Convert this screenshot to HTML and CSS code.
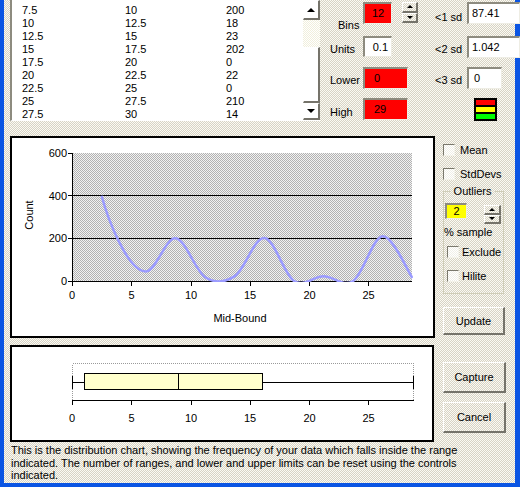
FILE: index.html
```html
<!DOCTYPE html>
<html>
<head>
    <meta charset="UTF-8">
    <title>Distribution</title>
    <link rel="stylesheet" href="styles.css">
</head>
<body>
    <div class="window">
        <div class="top">
            <div class="list">
                <div class="rows">
                    <div class="row"><span>7.5</span><span>10</span><span>200</span></div>
                    <div class="row"><span>10</span><span>12.5</span><span>18</span></div>
                    <div class="row"><span>12.5</span><span>15</span><span>23</span></div>
                    <div class="row"><span>15</span><span>17.5</span><span>202</span></div>
                    <div class="row"><span>17.5</span><span>20</span><span>0</span></div>
                    <div class="row"><span>20</span><span>22.5</span><span>22</span></div>
                    <div class="row"><span>22.5</span><span>25</span><span>0</span></div>
                    <div class="row"><span>25</span><span>27.5</span><span>210</span></div>
                    <div class="row"><span>27.5</span><span>30</span><span>14</span></div>
                </div>
                <div class="scroll">
                    <div class="raised sb-up"><i class="arr-up"></i></div>
                    <div class="track"></div>
                    <div class="raised thumb"></div>
                    <div class="raised sb-down"><i class="arr-down"></i></div>
                </div>
            </div>
            <div class="controls">
                <span class="lbl bins-lbl">Bins</span>
                <div class="bins-cell">
                    <div class="field red bins">12</div>
                    <div class="spin">
                        <span class="raised"><i class="arr-up sm"></i></span>
                        <span class="raised"><i class="arr-down sm"></i></span>
                    </div>
                </div>
                <span class="lbl sd1-lbl">&lt;1 sd</span>
                <div class="field sd">87.41</div>

                <span class="lbl mid-lbl">Units</span>
                <div><div class="field units">0.1</div></div>
                <span class="lbl mid-lbl">&lt;2 sd</span>
                <div class="field sd">1.042</div>

                <span class="lbl mid-lbl">Lower</span>
                <div><div class="field red wide">0</div></div>
                <span class="lbl mid-lbl">&lt;3 sd</span>
                <div class="field sd short">0</div>

                <span class="lbl high-lbl">High</span>
                <div><div class="field red wide">29</div></div>
                <span></span>
                <div class="lights">
                    <span class="l-red"></span>
                    <span class="l-yellow"></span>
                    <span class="l-green"></span>
                </div>
            </div>
        </div>

        <div class="middle">
            <div class="chart">
                <svg class="plot" width="421" height="198" viewBox="0 0 421 198">
                    <defs>
                        <pattern id="grey" width="2" height="2" patternUnits="userSpaceOnUse">
                            <rect width="2" height="2" fill="#f2f2f2"/>
                            <rect width="1" height="1" fill="#b2b2b2"/>
                            <rect x="1" y="1" width="1" height="1" fill="#b2b2b2"/>
                        </pattern>
                        <clipPath id="area"><rect x="60" y="15" width="341" height="129"/></clipPath>
                    </defs>
                    <rect x="60" y="15" width="340" height="128" fill="url(#grey)"/>
                    <g stroke="#000" stroke-width="1" shape-rendering="crispEdges">
                        <line x1="60" y1="57.5" x2="400" y2="57.5"/>
                        <line x1="60" y1="100.5" x2="400" y2="100.5"/>
                        <line x1="60.5" y1="15" x2="60.5" y2="144"/>
                        <line x1="60" y1="143.5" x2="400" y2="143.5"/>
                        <line x1="56" y1="15.5" x2="60" y2="15.5"/>
                        <line x1="56" y1="57.5" x2="60" y2="57.5"/>
                        <line x1="56" y1="100.5" x2="60" y2="100.5"/>
                        <line x1="56" y1="143.5" x2="60" y2="143.5"/>
                        <line x1="60.5" y1="143" x2="60.5" y2="148"/>
                        <line x1="119.5" y1="143" x2="119.5" y2="148"/>
                        <line x1="179.5" y1="143" x2="179.5" y2="148"/>
                        <line x1="238.5" y1="143" x2="238.5" y2="148"/>
                        <line x1="297.5" y1="143" x2="297.5" y2="148"/>
                        <line x1="356.5" y1="143" x2="356.5" y2="148"/>
                    </g>
                    <path clip-path="url(#area)" fill="none" stroke="#9b9bff" stroke-width="2.5"
                        d="M89.6 57.7 C95 78 115 133.4 134 133.4 C143.9 133.4 153.7 99.3 163.6 100.3 C173.5 101.3 183.3 132.9 193.2 139.2 C203.1 145.5 212.9 144.7 222.8 138.1 C232.7 131.6 242.5 99.1 252.4 99.9 C262.3 100.7 272.1 136.6 282 143 C291.9 149.4 301.7 138.3 311.6 138.3 C321.5 138.3 331.3 149.7 341.2 143 C351.1 136.3 360.9 98.7 370.8 98.2 C380.7 97.7 395.5 133 400.4 140"/>
                    <g class="ylab">
                        <text x="55" y="19">600</text>
                        <text x="55" y="62">400</text>
                        <text x="55" y="104">200</text>
                        <text x="55" y="147">0</text>
                    </g>
                    <g class="xlab">
                        <text x="60" y="161">0</text>
                        <text x="119.5" y="161">5</text>
                        <text x="179" y="161">10</text>
                        <text x="238" y="161">15</text>
                        <text x="297.5" y="161">20</text>
                        <text x="356.5" y="161">25</text>
                        <text x="228" y="184">Mid-Bound</text>
                        <text transform="translate(21 77) rotate(-90)">Count</text>
                    </g>
                </svg>
            </div>
            <div class="side">
                <div class="opt mean"><span class="check"></span>Mean</div>
                <div class="opt std"><span class="check"></span>StdDevs</div>
                <fieldset class="outliers">
                    <legend>Outliers</legend>
                    <div class="out-row">
                        <div class="field yellow">2</div>
                        <div class="spin small">
                            <span class="raised"><i class="arr-up sm"></i></span>
                            <span class="raised"><i class="arr-down sm"></i></span>
                        </div>
                    </div>
                    <div class="pct">% sample</div>
                    <div class="opt inner exclude"><span class="check"></span>Exclude</div>
                    <div class="opt inner hilite"><span class="check"></span>Hilite</div>
                </fieldset>
                <div class="btn update">Update</div>
            </div>
        </div>

        <div class="bottom">
            <div class="boxplot">
                <svg class="plot" width="420" height="93" viewBox="0 0 420 93">
                    <rect x="60.5" y="16.5" width="341" height="37" fill="#fff" stroke="#9a9a9a" stroke-dasharray="1 1" shape-rendering="crispEdges"/>
                    <g stroke="#000" stroke-width="1" shape-rendering="crispEdges">
                        <line x1="60" y1="53.5" x2="402" y2="53.5"/>
                        <line x1="60.5" y1="53" x2="60.5" y2="58"/>
                        <line x1="119.5" y1="53" x2="119.5" y2="58"/>
                        <line x1="179.5" y1="53" x2="179.5" y2="58"/>
                        <line x1="238.5" y1="53" x2="238.5" y2="58"/>
                        <line x1="297.5" y1="53" x2="297.5" y2="58"/>
                        <line x1="356.5" y1="53" x2="356.5" y2="58"/>
                        <line x1="60" y1="35.5" x2="402" y2="35.5"/>
                        <line x1="60.5" y1="29" x2="60.5" y2="42"/>
                        <line x1="401.5" y1="29" x2="401.5" y2="42"/>
                        <rect x="72.5" y="26.5" width="178" height="16" fill="#ffffcc"/>
                        <line x1="166.5" y1="26" x2="166.5" y2="43"/>
                    </g>
                    <g class="xlab">
                        <text x="60" y="75">0</text>
                        <text x="119.5" y="75">5</text>
                        <text x="179" y="75">10</text>
                        <text x="238" y="75">15</text>
                        <text x="297.5" y="75">20</text>
                        <text x="356.5" y="75">25</text>
                    </g>
                </svg>
            </div>
            <div class="buttons">
                <div class="btn">Capture</div>
                <div class="btn">Cancel</div>
            </div>
        </div>

        <p class="desc">This is the distribution chart, showing the frequency of your data which falls inside the range<br>indicated. The number of ranges, and lower and upper limits can be reset using the controls<br>indicated.</p>
    </div>
</body>
</html>
```

FILE: styles.css
```css
* {
    margin: 0;
    padding: 0;
}
body {
    font: 11px "Liberation Sans", Arial, sans-serif;
    color: #000;
}
.window {
    width: 520px;
    height: 487px;
    box-sizing: border-box;
    border-left: 4px solid #0b55e3;
    border-right: 5px solid #0b55e3;
    border-bottom: 4px solid #0b55e3;
    padding-left: 6px;
    background: repeating-conic-gradient(#d7d3c5 0 25%, #fbfaf3 0 50%) 0 0 / 2px 2px;
}
.raised {
    box-sizing: border-box;
    display: flex;
    align-items: center;
    justify-content: center;
    border-style: solid;
    border-width: 1px 2px 2px 1px;
    border-color: #fff #75736a #75736a #fff;
}
.arr-up, .arr-down {
    display: block;
    width: 0;
    height: 0;
    border-left: 4px solid transparent;
    border-right: 4px solid transparent;
}
.arr-up {
    border-bottom: 4px solid #000;
}
.arr-down {
    border-top: 4px solid #000;
}
.arr-up.sm, .arr-down.sm {
    border-left-width: 3px;
    border-right-width: 3px;
    border-top-width: 3px;
    border-bottom-width: 3px;
}
.arr-up.sm {
    border-top: 0;
}
.arr-down.sm {
    border-bottom: 0;
}

/* top: list and numeric controls */
.top {
    display: flex;
    height: 121px;
}
.list {
    flex-shrink: 0;
    width: 310px;
    height: 121px;
    box-sizing: border-box;
    border-left: 2px solid #8d8b7f;
    border-bottom: 1px solid #fff;
    background: #fff;
    display: flex;
}
.rows {
    flex: 1;
    padding: 4px 0 0 10px;
    line-height: 13px;
}
.row {
    display: grid;
    grid-template-columns: 103px 101px auto;
}
.scroll {
    width: 17px;
    display: flex;
    flex-direction: column;
}
.sb-up {
    height: 20px;
}
.track {
    height: 27px;
    background: repeating-conic-gradient(#f1efdc 0 25%, #fff 0 50%) 0 0 / 2px 2px;
}
.thumb {
    height: 56px;
}
.sb-down {
    height: 17px;
}
.controls {
    flex-shrink: 0;
    margin-left: 10px;
    padding-top: 2px;
    display: grid;
    grid-template-columns: 33px 72px 32px 53px;
    grid-template-rows: 34px 31px 31px 22px;
    align-items: start;
}
.lbl {
    line-height: 13px;
    white-space: nowrap;
}
.bins-lbl {
    margin: 17px 0 0 8px;
}
.sd1-lbl {
    margin-top: 9px;
}
.mid-lbl {
    margin-top: 7px;
}
.high-lbl {
    margin-top: 8px;
}
.field {
    box-sizing: border-box;
    height: 22px;
    border-style: solid;
    border-width: 2px 1px 1px 2px;
    border-color: #8d8b7f #eeede4 #eeede4 #8d8b7f;
    background: #fff;
    line-height: 19px;
    white-space: nowrap;
    overflow: hidden;
}
.red {
    background: #ff0000;
}
.bins-cell {
    display: flex;
}
.bins {
    width: 29px;
    text-align: center;
}
.units {
    width: 29px;
    height: 21px;
    line-height: 18px;
    text-align: right;
    padding-right: 3px;
}
.wide {
    width: 45px;
    padding-left: 9px;
}
.sd {
    width: 53px;
    padding-left: 3px;
}
.sd.short {
    width: 35px;
    padding-left: 5px;
}
.spin {
    margin-left: 10px;
    width: 16px;
    height: 21px;
    display: flex;
    flex-direction: column;
}
.spin span {
    flex: 1;
}
.lights {
    margin-left: 7px;
    width: 23px;
    height: 23px;
    box-sizing: border-box;
    border: 2px solid #000;
    background: #000;
    display: flex;
    flex-direction: column;
    gap: 2px;
}
.lights span {
    flex: 1;
}
.l-red {
    background: #ff0000;
}
.l-yellow {
    background: #ffff00;
}
.l-green {
    background: #00ff00;
}

/* middle: frequency chart and options */
.middle {
    display: flex;
    margin-top: 15px;
}
.chart {
    flex-shrink: 0;
    width: 425px;
    height: 202px;
    box-sizing: border-box;
    border: 2px solid #000;
    background: #fff;
}
.plot {
    display: block;
}
.plot text {
    font: 11px "Liberation Sans", Arial, sans-serif;
    fill: #000;
}
.ylab text {
    text-anchor: end;
}
.xlab text {
    text-anchor: middle;
}
.side {
    flex-shrink: 0;
    width: 62px;
    margin-left: 8px;
}
.opt {
    display: flex;
    align-items: center;
    height: 13px;
    white-space: nowrap;
}
.check {
    flex-shrink: 0;
    width: 12px;
    height: 12px;
    box-sizing: border-box;
    margin-right: 5px;
    border: 1px solid;
    border-color: #7a786c #f4f3ea #f4f3ea #7a786c;
    background: repeating-conic-gradient(#f1f0e8 0 25%, #fff 0 50%) 0 0 / 2px 2px;
}
.mean {
    margin-top: 7px;
}
.std {
    margin-top: 11px;
}
.outliers {
    margin-top: 5px;
    width: 61px;
    box-sizing: border-box;
    padding: 0 2px 11px 0;
    border: 1px solid #cfcdb8;
}
.outliers legend {
    margin: 0 auto;
    padding: 0 3px;
    line-height: 13px;
}
.out-row {
    display: flex;
    justify-content: space-between;
    align-items: flex-start;
    margin-top: 5px;
    padding-left: 1px;
}
.yellow {
    width: 22px;
    height: 16px;
    line-height: 13px;
    text-align: center;
    background: #ffff00;
}
.spin.small {
    margin: 2px 0 0 0;
    width: 17px;
    height: 19px;
}
.pct {
    margin-top: 2px;
    line-height: 13px;
    white-space: nowrap;
}
.inner {
    padding-left: 3px;
}
.inner .check {
    margin-right: 3px;
}
.exclude {
    margin-top: 6px;
}
.hilite {
    margin-top: 11px;
}
.btn {
    box-sizing: border-box;
    display: flex;
    align-items: center;
    justify-content: center;
    border-style: solid;
    border-width: 1px 2px 2px 1px;
    border-color: #fff #75736a #75736a #fff;
}
.update {
    margin-top: 13px;
    width: 62px;
    height: 28px;
}

/* bottom: box plot and buttons */
.bottom {
    display: flex;
    margin-top: 7px;
}
.boxplot {
    flex-shrink: 0;
    width: 424px;
    height: 97px;
    box-sizing: border-box;
    border: 2px solid #000;
    background: #fff;
}
.buttons {
    margin-left: 9px;
    padding-top: 17px;
    display: flex;
    flex-direction: column;
    gap: 9px;
}
.buttons .btn {
    width: 63px;
    height: 31px;
}
.desc {
    margin-top: 2px;
    padding-left: 1px;
    line-height: 12.5px;
    white-space: nowrap;
}
```
